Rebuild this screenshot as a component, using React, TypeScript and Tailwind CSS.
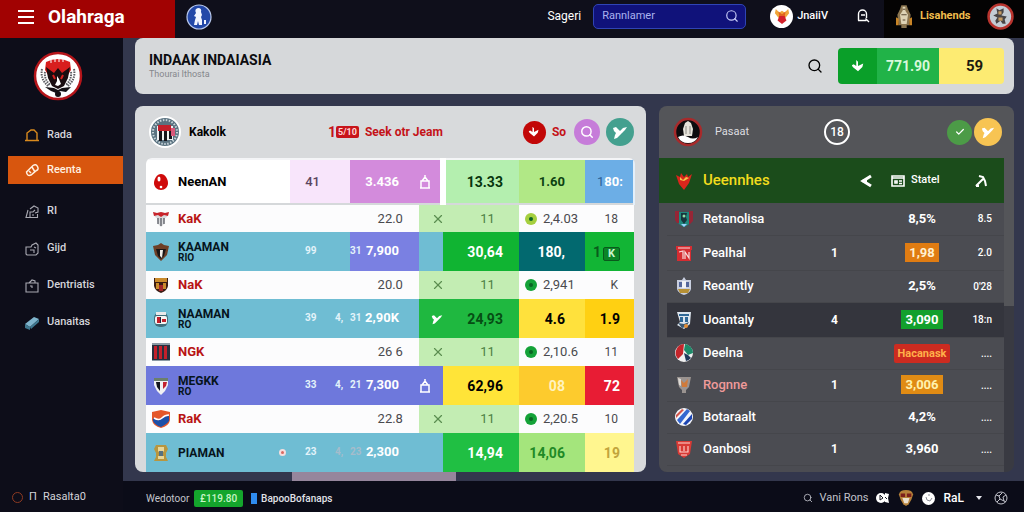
import type { ReactNode } from "react";
import { Check, Search, X } from "lucide-react";

type IconProps = { className?: string };

/* ---------- small icons ---------- */

function Bird({ className }: IconProps) {
  return (
    <svg className={className} viewBox="0 0 16 16" fill="currentColor" aria-hidden="true">
      <path d="M1 4l3-1 3 3 1 1 3-3 4-1-2 3-3 3-5 5-3 1 1-4 1-2-2-2z" />
    </svg>
  );
}

function ArrowDrop({ className }: IconProps) {
  return (
    <svg className={className} viewBox="0 0 16 16" fill="currentColor" aria-hidden="true">
      <path d="M6 1l2 2v5l6-3-1 4-5 5-6-5-1-2 2-1 3 2z" />
    </svg>
  );
}

function LockTag({ className }: IconProps) {
  return (
    <svg className={className} viewBox="0 0 12 14" fill="none" stroke="currentColor" strokeWidth="1.5" aria-hidden="true">
      <path d="M2 6h8v7H2zM3 6l3-4 3 4M6 0v3M1 13h10" />
    </svg>
  );
}

function BagSearch({ className }: IconProps) {
  return (
    <svg className={className} viewBox="0 0 14 14" fill="none" stroke="currentColor" strokeWidth="1.4" aria-hidden="true">
      <path d="M2.5 11.5V5a4 4 0 018 0v4M5 6h4M2 11.5h8.5M9.500 9.500L13 13" />
    </svg>
  );
}

function HomeTag({ className }: IconProps) {
  return (
    <svg className={className} viewBox="0 0 14 14" fill="none" stroke="currentColor" strokeWidth="1.4" aria-hidden="true">
      <path d="M0 12.500h3M11 12.500h3M2 12.500V5l4-3h3l3 3v7.500z" />
    </svg>
  );
}

function Marker({ className }: IconProps) {
  return (
    <svg className={className} viewBox="0 0 14 14" fill="none" stroke="currentColor" strokeWidth="1.5" aria-hidden="true">
      <path d="M1.500 9L8 2.500q3-2 4.500 1t-1 4L6 12q-4 1.500-4.500-3zM7 4l3 5M4 8l2 2" />
    </svg>
  );
}

function FolderUp({ className }: IconProps) {
  return (
    <svg className={className} viewBox="0 0 14 14" fill="none" stroke="currentColor" strokeWidth="1.1" aria-hidden="true">
      <path d="M3 5L1 12.500h11.500V9M5 12V7h3l2-2M5 4l4-3 4 2v4l-3 1M8 9v2" />
    </svg>
  );
}

function CameraTag({ className }: IconProps) {
  return (
    <svg className={className} viewBox="0 0 14 14" fill="none" stroke="currentColor" strokeWidth="1.1" aria-hidden="true">
      <path d="M1 5h5l1-2 4-2 2 2v8l-2 2H2l-1-1zM5 8h4v3M9 5l2 1" />
    </svg>
  );
}

function CaseTag({ className }: IconProps) {
  return (
    <svg className={className} viewBox="0 0 14 14" fill="none" stroke="currentColor" strokeWidth="1.1" aria-hidden="true">
      <path d="M1 4h12v9H1zM4 4l3-3 3 1v2M5 7h2v2" />
    </svg>
  );
}

function Eraser({ className }: IconProps) {
  return (
    <svg className={className} viewBox="0 0 14 14" aria-hidden="true">
      <path d="M0 8l9-7 5 2-9 8z" fill="#7fb4cc" />
      <path d="M0 8l5 3v3l-5-2zM5 11l9-8v3l-8 7z" fill="#3f7890" />
    </svg>
  );
}

function Ball({ className }: IconProps) {
  return (
    <svg className={className} viewBox="0 0 14 14" fill="none" stroke="currentColor" strokeWidth="1" aria-hidden="true">
      <circle cx="7" cy="7" r="6" />
      <path d="M2 4l3 1 1 3-3 3M12 4L9 6l1 4 2 1M5 5l3-3M6 8l4 2" />
    </svg>
  );
}

/* ---------- club crests ---------- */

const SHIELD = "M2 2h14v8q-1 5-7 7-6-2-7-7z";

const crests: Record<string, ReactNode> = {
  egg: (
    <>
      <path d="M9 1c4 0 7 5 7 9s-3 7-7 7-7-3-7-7 3-9 7-9z" fill="#cf0a0a" />
      <ellipse cx="7" cy="6" rx="1.500" ry="2.500" fill="#fff" />
      <circle cx="9" cy="14" r="1.300" fill="#fff" />
    </>
  ),
  eagle: (
    <>
      <path d="M1 2l4 1 4-1 4 1 4-1-2 5-2 1-1 6-3 3-3-3-1-6-2-1z" fill="#d9dadd" />
      <path d="M1 2l4 1 4-1 4 1 4-1-1 4-4-1-3 2-3-2-4 1z" fill="#c8242b" />
      <path d="M6 8v6M9 8v8M12 8v6" stroke="#4a4d57" strokeWidth="1.200" />
    </>
  ),
  bronze: (
    <>
      <path d="M1 3l5-1 3-2 3 2 5 1-2 9-6 6-6-6z" fill="#6e4027" />
      <path d="M4 6h10l-2 7-3 3-3-3z" fill="#1a1616" />
      <path d="M8 7h3l-1 8-2-2z" fill="#f1eee8" />
    </>
  ),
  gold: (
    <>
      <path d={SHIELD} fill="#3a1c14" />
      <path d="M3 2h12v4H3zM4 7h3v6H4zM11 7h3v6h-3z" fill="#c98a2c" />
      <path d="M7 9h4v6H7z" fill="#a2272a" />
    </>
  ),
  round: (
    <>
      <rect x="2" y="2" width="14" height="15" rx="6" fill="#3f6f7d" />
      <rect x="3" y="6" width="12" height="8" rx="2" fill="#f5f4f2" />
      <path d="M4 2h10v3H4z" fill="#e9e9ea" />
      <path d="M5 7h3v6H5zM10 9h4v3h-4z" fill="#c11f2b" />
      <path d="M8 7h1v6H8z" fill="#1d2940" />
    </>
  ),
  stripes: (
    <>
      <path d="M0 0h18v18H0z" fill="#27303f" />
      <path d="M2 3h3v13H2zM7 3h3v13H7zM12 3h3v13h-3z" fill="#c3202b" />
      <path d="M0 0h18v2H0zM0 17h18v1H0z" fill="#8d9aa5" />
    </>
  ),
  badge: (
    <>
      <path d="M2 1h14v7l-3 6-4 4-4-4-3-6z" fill="#f1f1f3" />
      <path d="M2 1h14v3H2z" fill="#6c7f6b" />
      <path d="M4 5h4v9l-3-4z" fill="#15161e" />
      <path d="M11 5h4l-1 4-3 3z" fill="#c32230" />
    </>
  ),
  wave: (
    <>
      <path d="M0 2l9-2 9 2v8q-1 6-9 8-8-2-9-8z" fill="#e4572a" />
      <path d="M1 8q5 4 8 1t8-3v5q-2 3-8 6-6-2-8-6z" fill="#1c4fa8" />
      <path d="M2 8q5 3 8 0t7-3" stroke="#fff" strokeWidth="1.500" fill="none" />
    </>
  ),
  trophy: (
    <>
      <path d="M4 1h10l2 4-2 4v4l2 4H2l2-4V9L2 5z" fill="#b8963f" />
      <path d="M6 3h6v4l-3 3-3-3zM6 12h6v3H6z" fill="#e9d79a" />
      <path d="M7 7h4v5H7z" fill="#567182" />
    </>
  ),
  fire: (
    <>
      <path d="M1 3l4 2 1-4 3 4 3-3 1 3 4-3-3 9-5 7-5-6z" fill="#d9261c" />
      <path d="M5 5l3 3 3-3 3 1-5 3-4-1z" fill="#f3c34a" />
    </>
  ),
  phoenix: (
    <>
      <path d="M2 1l4 4 3-2 3 2 4-4 1 5-4 5H5L1 6z" fill="#f0a63a" />
      <path d="M5 4l4 3 4-3-1 6H6z" fill="#e2641f" />
      <path d="M6 9h6l2 5-5 4-5-4z" fill="#d3202a" />
    </>
  ),
  teal: (
    <>
      <path d={SHIELD} fill="#20897e" />
      <path d="M0 1h4v12H2L0 10zM14 1h4v10l-3 3h-1z" fill="#962636" />
      <path d="M6 3h6l-1 4 1 3-3 4-3-4z" fill="#19343c" />
      <circle cx="9" cy="6" r="1.500" fill="#8fe0a8" />
      <path d="M6 14h6l-3 3z" fill="#9bd0ff" />
    </>
  ),
  red: (
    <>
      <path d="M1 2h16v4h-1v11H2V6H1z" fill="#d62c31" />
      <path d="M3 4h12M4 8l4-1v8M10 15V8l4 6V8" stroke="#f7dcdc" strokeWidth="1.200" fill="none" />
    </>
  ),
  castle: (
    <>
      <path d="M2 3h5l2-3 2 3h5v9q-1 4-7 6-6-2-7-6z" fill="#c9cfdf" />
      <path d="M4 5h10v5H4z" fill="#53659a" />
      <path d="M7 4h4v7H7z" fill="#f0f1f5" />
      <path d="M3 12h12l-2 4H5z" fill="#b69035" />
    </>
  ),
  blue: (
    <>
      <path d="M2 1h14l-1 12-6 5-7-4 3-3z" fill="#dde5ee" />
      <path d="M4 3h10v2H4zM5 6h3v5H5zM10 6h3v5h-3z" fill="#2f6796" />
      <path d="M3 12l6 1 5-2-3 5-4 1z" fill="#3c5a74" />
      <circle cx="11" cy="15" r="2" fill="#e58d33" />
    </>
  ),
  globe: (
    <>
      <circle cx="9" cy="9" r="9" fill="#f1f1f1" />
      <path d="M9 0a9 9 0 00-6 15l5-5z" fill="#c4252b" />
      <path d="M10 0a9 9 0 018 9l-5 2-4-5z" fill="#1e8a6a" />
      <path d="M9 9l4 2 3 3a9 9 0 01-5 3z" fill="#223a5c" />
    </>
  ),
  vase: (
    <>
      <path d="M2 1h14l-2 10-3 3v3H7v-3l-3-3z" fill="#9a9390" />
      <path d="M6 4l3 3 4-4-1 8H7z" fill="#d07a3a" />
      <path d="M3 2l3 1v7l-2-1z" fill="#dcd9d5" />
    </>
  ),
  ball: (
    <>
      <circle cx="9" cy="9" r="9" fill="#f4f6fb" />
      <path d="M2 12L12 1l3 2L5 16z" fill="#3568d0" />
      <path d="M1 7l6-6 2 1-8 8z" fill="#d2574b" />
      <path d="M8 16l9-10v5l-6 6z" fill="#1c45b3" />
    </>
  ),
  cup: (
    <>
      <path d="M1 1h16l-2 13-6 4-6-4z" fill="#d83a35" />
      <path d="M3 3h12M5 6v6h8V6M9 6v5M6 15h6" stroke="#ffd6cf" strokeWidth="1.100" fill="none" />
    </>
  ),
  statue: (
    <>
      <path d="M7 1h4l1 3 2 4-1 8h-2v2H7v-2H5L4 8l2-4z" fill="#8a7550" />
      <path d="M8 2h2v3l2 3-1 7H7L6 8l2-3z" fill="#ded3b5" />
      <path d="M8 4h2M7 8h4M8 12h2" stroke="#5b4b34" strokeWidth="0.800" />
      <path d="M3 10l2 1v5H3zM13 11l2-1v6h-2z" fill="#c88426" />
    </>
  ),
  mask: (
    <>
      <path d="M1 5q1-5 8-5t8 5l-2 6-3 5-3 2-3-2-3-5z" fill="#b5813a" />
      <path d="M3 4h5v4H3zM10 4h5v4h-5z" fill="#7c1f1b" />
      <path d="M5 9h8l-2 6H7z" fill="#eadfce" />
    </>
  ),
};

function Crest({ name, className = "size-[18px]" }: { name: string; className?: string }) {
  return (
    <svg className={`shrink-0 ${className}`} viewBox="0 0 18 18" aria-hidden="true">
      {crests[name]}
    </svg>
  );
}

function GarudaLogo() {
  return (
    <svg className="size-[50px]" viewBox="0 0 50 50" aria-label="Garuda">
      <circle cx="25" cy="25" r="23" fill="#fff" stroke="#b5151a" strokeWidth="2.500" />
      <path d="M13 11q12-6 24 0l1 8-5 8H17l-5-8z" fill="#d81e1e" />
      <path d="M13 16l8 6 4-5 4 5 8-6-2 11-4 8-6 3-6-3-4-8z" fill="#1a0d10" />
      <path d="M18 9v3M22 8v3M26 8v3M30 8v3" stroke="#fff" strokeWidth="1" />
      <path d="M9 18q-2 10 6 17M12 21q-1 7 5 13M41 18q2 10-6 17M38 21q1 7-5 13" stroke="#5d5d62" strokeWidth="2" strokeDasharray="1.500 1" fill="none" />
      <path d="M20 24l2 4M30 24l-2 4" stroke="#d81e1e" strokeWidth="2" />
      <path d="M24 25l2 3 2 5-3 2-3-1 2-4z" fill="#fff" />
      <path d="M12 36l9 1 4 2 4-2 9-1-5 5-6-1-4 2-5-2z" fill="#141014" />
      <circle cx="25" cy="43" r="3" fill="#141014" />
    </svg>
  );
}

/* ---------- standings data ---------- */

type Row = {
  crest: string;
  name: string;
  sub?: string;
  rank?: string;
  mark?: string;
  diff?: string;
  total: string;
  tag?: "lock" | "check";
  score: string;
  rate: string;
  last: string;
  faint?: boolean;
  bg: string[]; // name, rank, total, tag, score, rate, last
};

const AQUA = "bg-[#6fbdd3]";
const INDIGO = "bg-[#6e78dc]";

const rows: Row[] = [
  {
    crest: "bronze", name: "KAAMAN", sub: "RIO", rank: "99", diff: "31", total: "7,900", score: "30,64", rate: "180,", last: "1",
    bg: [AQUA, AQUA, "bg-[#7a80e2]", AQUA, "bg-[#10b432] text-white", "bg-[#02696f] text-white", "bg-[#12b535] text-[#0a5a1c]"],
  },
  {
    crest: "round", name: "NAAMAN", sub: "RO", rank: "39", mark: "4,", diff: "31", total: "2,90K", tag: "check", score: "24,93", rate: "4.6", last: "1.9",
    bg: [AQUA, AQUA, AQUA, "bg-[#1fb840]", "bg-[#1fb840] text-[#064d14]", "bg-[#ffe13c] text-black", "bg-[#ffd012] text-black"],
  },
  {
    crest: "badge", name: "MEGKK", sub: "RO", rank: "33", mark: "4,", diff: "21", total: "7,300", tag: "lock", score: "62,96", rate: "08", last: "72",
    bg: [INDIGO, INDIGO, INDIGO, INDIGO, "bg-[#ffe438] text-black", "bg-[#fdcb2d] text-[#fff3c0]", "bg-[#e81c34] text-white"],
  },
  {
    crest: "trophy", name: "PIAMAN", rank: "23", mark: "4,", diff: "23", total: "2,300", score: "14,94", rate: "14,06", last: "19", faint: true,
    bg: [AQUA, AQUA, AQUA, AQUA, "bg-[#20bf43] text-white", "bg-[#a4e57c] text-[#1f8a26]", "bg-[#fff68f] text-[#c2a43c]"],
  },
];

const subRows = [
  { crest: "eagle", name: "KaK", total: "22.0", rate: "2,4.03", last: "18", dot: "bg-[#a5cf3f]" },
  { crest: "gold", name: "NaK", total: "20.0", rate: "2,941", last: "K", dot: "bg-[#14a238]" },
  { crest: "stripes", name: "NGK", total: "26 6", rate: "2,10.6", last: "11", dot: "bg-[#14a238]" },
  { crest: "wave", name: "RaK", total: "22.8", rate: "2,20.5", last: "10", dot: "bg-[#14a238]" },
];

function SubRow({ row }: { row: (typeof subRows)[number] }) {
  return (
    <tr className="h-7 bg-[#fcfcfd] text-[13px] text-[#4a4a4e]">
      <td>
        <div className="flex items-center gap-2 pl-1.5">
          <Crest name={row.crest} />
          <span className="font-bold text-[#b81414]">{row.name}</span>
        </div>
      </td>
      <td />
      <td className="pr-4 text-right">{row.total}</td>
      <td className="bg-[#c3edb3]">
        <X className="ml-3 size-3.5 text-[#5b8d50]" strokeWidth={2} />
      </td>
      <td className="bg-[#c3edb3] pr-6 text-right text-[#4c8044]">11</td>
      <td>
        <div className="flex items-center gap-1.5 pl-1.5">
          <span className={`flex size-3 shrink-0 items-center justify-center rounded-full ${row.dot}`}>
            <span className="size-1 rounded-full bg-[#0b6424]" />
          </span>
          {row.rate}
        </div>
      </td>
      <td className="pr-4 text-right text-xs">{row.last}</td>
    </tr>
  );
}

function MainRow({ row }: { row: Row }) {
  const bg = row.bg;
  const soft = row.faint ? "text-[#a5bccb]" : "text-[#e3f3fa]";
  return (
    <tr className="h-[39px] text-sm font-bold text-white">
      <td className={bg[0]}>
        <div className="flex items-center gap-2 pl-1.5">
          <Crest name={row.crest} />
          <div className="text-xs leading-3 text-[#06141c]">
            {row.name}
            {row.sub && <div className="text-[10px] leading-2.5">{row.sub}</div>}
          </div>
          {row.faint && (
            <span className="mr-1 ml-auto flex size-[7px] items-center justify-center rounded-full bg-[#f4dede]">
              <span className="size-[3px] rounded-full bg-[#d96a62]" />
            </span>
          )}
        </div>
      </td>
      <td className={bg[1]}>
        <div className="flex pl-[15px] text-[10px] text-[#e3f3fa]">
          <span className="w-[30px]">{row.rank}</span>
          <span className={soft}>{row.mark}</span>
        </div>
      </td>
      <td className={bg[2]}>
        <div className="flex items-center justify-between pr-5 text-[13px] whitespace-nowrap">
          <span className={`text-[10px] ${soft}`}>{row.diff}</span>
          {row.total}
        </div>
      </td>
      <td className={bg[3]}>
        {row.tag === "lock" && <LockTag className="h-3.5 w-3" />}
        {row.tag === "check" && <Bird className="ml-3 size-3" />}
      </td>
      <td className={`pr-4 text-right ${bg[4]}`}>{row.score}</td>
      <td className={`pr-5 text-right ${bg[5]}`}>{row.rate}</td>
      <td className={`pr-3.5 text-right ${bg[6]}`}>
        {row.last}
        {row.last === "1" && (
          <span className="ml-0.5 inline-block rounded-xs border border-[#0a5a1c] bg-[#0b8527] px-1 text-[11px] leading-3 text-[#c9f5cf]">
            K
          </span>
        )}
      </td>
    </tr>
  );
}

function StandingsPanel() {
  return (
    <section className="overflow-hidden rounded-lg bg-[#d8dadc]">
      <div className="flex h-[52px] items-center pr-3 pl-3.5">
        <svg className="size-8" viewBox="0 0 32 32" aria-hidden="true">
          <circle cx="16" cy="16" r="15" fill="#5a7280" stroke="#fff" strokeWidth="2" />
          <circle cx="16" cy="16" r="12" fill="none" stroke="#c9d5da" strokeWidth="2" strokeDasharray="1.500 1.500" />
          <path d="M8 10h16v14H8z" fill="#eef0f2" />
          <path d="M9 9h13v6H9z" fill="#c3202b" />
          <path d="M10 15h3v10h-3zM15 15h3v10h-3zM20 15h3v8h-3z" fill="#15151c" />
          <path d="M22 12h4v8h-4z" fill="#d8587a" />
        </svg>
        <h2 className="ml-2 w-[139px] text-xs font-bold">Kakolk</h2>
        <div className="flex items-center text-xs font-bold text-[#c41218]">
          <span className="text-sm">1</span>
          <span className="rounded-xs bg-[#c8141a] px-0.5 text-[9px] leading-3 text-[#ffd8d8]">5/10</span>
          <span className="ml-1.5">Seek otr Jeam</span>
        </div>
        <div className="ml-auto flex items-center gap-1.5">
          <button className="flex size-[23px] items-center justify-center rounded-full bg-[#c20707] text-white" aria-label="Turun">
            <ArrowDrop className="size-3" />
          </button>
          <span className="w-4 text-xs font-bold text-[#c41218]">So</span>
          <button className="flex size-[26px] items-center justify-center rounded-full bg-[#c67cd9] text-white" aria-label="Cari">
            <Search className="size-3.5" strokeWidth={2.5} />
          </button>
          <button className="flex size-7 items-center justify-center rounded-full bg-[#44a08f] text-white" aria-label="Kirim">
            <Bird className="size-4" />
          </button>
        </div>
      </div>

      <div className="mx-[11px] overflow-hidden rounded-t-md">
        <table className="w-full table-fixed border-collapse">
          <colgroup>
            <col />
            <col className="w-[60px]" />
            <col className="w-[69px]" />
            <col className="w-6" />
            <col className="w-[76px]" />
            <col className="w-[66px]" />
            <col className="w-[49px]" />
          </colgroup>
          <tbody>
            <tr className="h-[45px] border-t-2 border-b-2 border-t-[#f4f5f7] border-b-[#d5d8da] bg-white text-[13px] font-bold">
              <td>
                <div className="flex items-center gap-2 pl-1.5">
                  <Crest name="egg" />
                  NeenAN
                </div>
              </td>
              <td className="bg-[#f8e5fb] pr-[30px] text-right font-medium text-[#5c4560]">41</td>
              <td className="bg-[#d38bdc] pr-5 text-right text-white">3.436</td>
              <td className="border-r-6 border-white bg-[#d38bdc] text-white">
                <LockTag className="h-3.5 w-3" />
              </td>
              <td className="bg-[#b4efaf] pr-4 text-right text-sm text-[#06350d]">13.33</td>
              <td className="bg-[#b1e886] pr-5 text-right text-[#0d4212]">1.60</td>
              <td className="border-r-2 border-[#e3effa] bg-[#6caee6] pr-2.5 text-right text-white">
                <span className="font-normal text-[#2c5f95]">1</span>80:
              </td>
            </tr>
            {rows.flatMap((row, i) => [
              <SubRow key={subRows[i].name} row={subRows[i]} />,
              <MainRow key={row.name} row={row} />,
            ])}
          </tbody>
        </table>
      </div>
    </section>
  );
}

/* ---------- teams panel ---------- */

const teams = [
  { crest: "teal", name: "Retanolisa", value: "8,5%", last: "8.5", height: "h-8" },
  { crest: "red", name: "Pealhal", count: "1", value: "1,98", badge: "bg-[#e07c12] text-[#fff0d0]", last: "2.0", height: "h-[35px]" },
  { crest: "castle", name: "Reoantly", value: "2,5%", last: "0'28", height: "h-8" },
  { crest: "blue", name: "Uoantaly", count: "4", value: "3,090", badge: "bg-[#12a02c] text-white", last: "18:n", height: "h-[35px]", active: true },
  { crest: "globe", name: "Deelna", value: "Hacanask", badge: "rounded-xs bg-[#cc2b20] text-[11px] text-[#ffb04a]", last: "....", height: "h-8" },
  { crest: "vase", name: "Rognne", count: "1", value: "3,006", badge: "bg-[#e08b14] text-[#fff2ae]", last: "....", height: "h-8", red: true },
  { crest: "ball", name: "Botaraalt", value: "4,2%", last: "....", height: "h-8" },
  { crest: "cup", name: "Oanbosi", count: "1", value: "3,960", last: "....", height: "h-8" },
];

function TeamsPanel() {
  return (
    <section className="overflow-hidden rounded-lg bg-[linear-gradient(#545559_200px,#393a42_200px)] text-white">
      <div className="flex h-[52px] items-center pr-3 pl-3.5">
        <svg className="size-[30px]" viewBox="0 0 30 30" aria-hidden="true">
          <circle cx="15" cy="15" r="13" fill="#0d0c0e" stroke="#a82a2b" strokeWidth="2.500" />
          <path d="M12 6l3-2 3 2 2 6-1 7h-8l-1-7z" fill="#e6e3da" />
          <path d="M5 20q5-3 10 0t10 0q-3 6-10 6T5 20z" fill="#fff" />
          <path d="M13 9v8M17 9v8" stroke="#8c8a84" />
        </svg>
        <h2 className="ml-3 text-[11px] text-[#dedee0]">Pasaat</h2>
        <span className="ml-auto flex size-[26px] items-center justify-center rounded-full border-2 border-white text-xs font-medium">
          18
        </span>
        <div className="ml-[97px] flex items-center gap-0.5">
          <button className="flex size-[25px] items-center justify-center rounded-full bg-[#4c9b47]" aria-label="Setuju">
            <Check className="size-2.5" strokeWidth={3} />
          </button>
          <button className="flex size-7 items-center justify-center rounded-full bg-[#f7c453]" aria-label="Kirim">
            <Bird className="size-3.5" />
          </button>
        </div>
      </div>

      <div className="mr-2.5 bg-[#4b4c52] pb-1.5">
        <table className="w-full table-fixed border-collapse">
          <colgroup>
            <col className="w-2" />
            <col />
            <col className="w-[60px]" />
            <col className="w-[72px]" />
            <col className="w-[46px]" />
          </colgroup>
          <thead>
            <tr className="h-[45px] bg-[#1b4c1b] text-left">
              <th />
              <th>
                <div className="flex items-center gap-2.5 pl-2 text-[15px] font-medium text-[#f2dc1e]">
                  <Crest name="fire" />
                  Ueennhes
                </div>
              </th>
              <th>
                <svg className="mr-3.5 ml-auto h-3.5 w-3" viewBox="0 0 12 14" fill="none" stroke="currentColor" strokeWidth="3" aria-hidden="true">
                  <path d="M11 2L3 7l8 5M2 7h5" />
                </svg>
              </th>
              <th>
                <div className="flex items-center gap-1.5 pl-[5px] text-[11px] font-medium">
                  <svg className="h-3 w-3.5" viewBox="0 0 14 12" fill="none" stroke="currentColor" strokeWidth="1.600" aria-hidden="true">
                    <path d="M1 1h12v10H1zM1 3h12M4 6h2v2H4zM8 6h3M8 8.500h3" />
                  </svg>
                  Statel
                </div>
              </th>
              <th>
                <svg className="ml-4 size-3.5" viewBox="0 0 14 14" fill="none" stroke="currentColor" strokeWidth="2" aria-hidden="true">
                  <path d="M2 12l7-7M5 2l4 1 2 4 1 5M2 12h3" />
                </svg>
              </th>
            </tr>
          </thead>
          <tbody>
            {teams.map((t) => (
              <tr key={t.name} className={t.height}>
                <td />
                <td className={`border-b border-[#45464b] ${t.active ? "bg-[#34353d]" : ""}`}>
                  <div className={`flex items-center gap-2.5 pl-2 text-[13px] font-medium ${t.red ? "text-[#ef9a9a]" : ""}`}>
                    <Crest name={t.crest} />
                    {t.name}
                  </div>
                </td>
                <td className={`border-b border-[#45464b] pr-12 text-right text-xs font-bold ${t.active ? "bg-[#34353d]" : ""}`}>
                  {t.count}
                </td>
                <td className={`border-b border-[#45464b] text-center text-[13px] font-bold ${t.active ? "bg-[#34353d]" : ""}`}>
                  <span className={`inline-block px-1 leading-[19px] ${t.badge ?? ""}`}>{t.value}</span>
                </td>
                <td className={`border-b border-[#45464b] pr-3 text-right text-[10px] font-medium ${t.active ? "bg-[#34353d]" : ""}`}>
                  {t.last}
                </td>
              </tr>
            ))}
          </tbody>
        </table>
      </div>
    </section>
  );
}

/* ---------- page frame ---------- */

function TopBar() {
  return (
    <header className="flex h-[38px] bg-[#0f0f1b] text-white">
      <div className="flex w-[175px] items-center gap-3.5 bg-[#a10202] pb-1 pl-[18px]">
        <button aria-label="Menu" className="flex w-4 flex-col gap-1">
          <span className="h-0.5 bg-white" />
          <span className="h-0.5 bg-white" />
          <span className="h-0.5 bg-white" />
        </button>
        <a href="#" className="text-[19px] leading-6 font-bold">
          Olahraga
        </a>
      </div>
      <svg className="mt-1 ml-[11px] size-[26px]" viewBox="0 0 26 26" aria-hidden="true">
        <circle cx="13" cy="13" r="12" fill="#2348a8" stroke="#b9c9ee" strokeWidth="1.200" />
        <path d="M12 4q4 0 3 4l1 3-1 2 1 3v5h-3l-1-4-1 4H8l1-5 1-3-2-1 2-3q-2-4 2-5zM18 16h2v4h-2z" fill="#f2f5ff" />
      </svg>
      <div className="ml-auto flex items-center pb-1.5">
        <label htmlFor="search" className="mr-3 text-xs">
          Sageri
        </label>
        <div className="flex h-[25px] w-[153px] items-center rounded-[5px] border border-[#2f44b4] bg-[#10127a] pr-1.5 pl-2">
          <input
            id="search"
            placeholder="Rannlamer"
            className="min-w-0 flex-1 bg-transparent text-[11px] text-white outline-none placeholder:text-[#aab2f0]"
          />
          <Search className="size-3.5 text-[#c8cdf8]" />
        </div>
        <a href="#" className="ml-6 flex items-center gap-1 text-[11px] font-medium">
          <span className="flex size-[23px] items-center justify-center rounded-full bg-white">
            <Crest name="phoenix" className="size-4" />
          </span>
          JnaiiV
        </a>
        <button aria-label="Tas" className="mr-3.5 ml-7">
          <BagSearch className="size-3.5" />
        </button>
      </div>
      <div className="flex w-[140px] items-center bg-[#040303] pb-1.5 pl-2">
        <Crest name="statue" className="size-6" />
        <span className="ml-1 w-14 text-[11px] font-bold text-[#f0bd4d]">Lisahends</span>
        <svg className="mr-2.5 ml-auto size-[27px]" viewBox="0 0 26 26" aria-hidden="true">
          <circle cx="13" cy="13" r="11.500" fill="#c4ccd4" stroke="#b8342e" strokeWidth="2.500" />
          <path d="M9 5l3 2 4-2v4l-2 3 5 1-2 3 1 4h-3l-2-3-4 3-1-3 2-3-4-2 4-2z" fill="#4a4546" />
          <path d="M11 8h3v3h-3zM11 14h4v3h-4z" fill="#c59b62" />
        </svg>
      </div>
    </header>
  );
}

const menu = [
  { label: "Rada", icon: HomeTag },
  { label: "Reenta", icon: Marker },
  { label: "RI", icon: FolderUp },
  { label: "Gijd", icon: CameraTag },
  { label: "Dentriatis", icon: CaseTag },
  { label: "Uanaitas", icon: Eraser },
];

function Sidebar() {
  return (
    <aside className="flex w-[123px] shrink-0 flex-col bg-[#0d0d19] text-[11px] text-[#d4d4da]">
      <div className="flex h-[83px] justify-center pt-[13px] pr-2">
        <GarudaLogo />
      </div>
      <nav className="flex flex-col">
        {menu.slice(0, 2).map(({ label, icon: Icon }, i) => (
          <a
            key={label}
            href="#"
            className={`mb-[7px] ml-2 flex h-7 items-center gap-2 pl-[17px] font-medium ${
              i === 1 ? "bg-[#d8560e] text-[#fff0e0]" : ""
            }`}
          >
            <Icon className={i === 0 ? "size-3.5 text-[#d98a1e]" : "size-3.5"} />
            {label}
          </a>
        ))}
        <div className="pt-0.5">
          {menu.slice(2).map(({ label, icon: Icon }) => (
            <a key={label} href="#" className="ml-2 flex h-[37px] items-center gap-2 pl-[17px] font-medium">
              <Icon className="size-3.5 text-[#a9a9b2]" />
              {label}
            </a>
          ))}
        </div>
      </nav>
      <div className="mt-auto flex h-8 items-center gap-1.5 pl-3">
        <span className="size-[11px] rounded-full border border-[#8e3a22]" />
        <span className="w-2">Π</span>
        Rasalta0
      </div>
    </aside>
  );
}

function Footer() {
  return (
    <footer className="flex h-8 items-center bg-[#0b0c18] pt-0.5 pr-4 pl-[23px] text-[11px] text-[#c3c4cc]">
      <span className="w-11 text-[10px]">Wedotoor</span>
      <span className="ml-1 rounded-xs bg-[#14a52c] px-1.5 text-[10px] leading-[17px] font-medium text-[#c8f5c8]">£119.80</span>
      <span className="mr-1 ml-2 h-[11px] w-1.5 bg-[#2f8cf0]" />
      <span className="text-[10px] font-medium text-[#e1e2e8]">BapooBofanaps</span>
      <div className="ml-auto flex items-center">
        <Search className="size-2.5" />
        <a href="#" className="mr-2 ml-1.5">Vani Rons</a>
        <svg className="h-3 w-3.5" viewBox="0 0 14 12" aria-hidden="true">
          <circle cx="5" cy="6" r="5" fill="#fff" />
          <path d="M9 1l4 1-1 4 1 5-4-1z" fill="#fff" />
          <path d="M4 3v5l3-2zM9 5l2 2" stroke="#15151f" fill="none" />
        </svg>
        <Crest name="mask" className="mr-2 ml-2 size-4" />
        <svg className="mr-2 size-[13px]" viewBox="0 0 13 13" aria-hidden="true">
          <circle cx="6.500" cy="6.500" r="6.500" fill="#fff" />
          <path d="M4 5l1 3 3 1 2-3M6 3h2" stroke="#8b8d96" fill="none" />
        </svg>
        <span className="text-xs font-medium text-white">RaL</span>
        <svg className="mr-3 ml-3 h-1 w-1.5" viewBox="0 0 6 4" aria-hidden="true">
          <path d="M0 0h6L3 4z" fill="#e6e6ec" />
        </svg>
        <Ball className="size-3.5" />
      </div>
    </footer>
  );
}

export default function App() {
  return (
    <div className="flex min-h-screen flex-col bg-[#33374d] font-[Roboto,'Liberation_Sans',sans-serif]">
      <TopBar />
      <div className="flex flex-1">
        <Sidebar />
        <div className="flex min-w-0 flex-1 flex-col">
          <main className="flex-1 pr-2.5 pl-3">
            <div className="mb-3 flex h-14 items-center rounded-lg bg-[#d6d8da] pr-2.5 pl-3.5">
              <div>
                <h1 className="text-sm leading-4 font-bold text-[#0c0c0f]">INDAAK INDAIASIA</h1>
                <p className="text-[9px] leading-3 text-[#85878c]">Thourai Ithosta</p>
              </div>
              <button aria-label="Cari" className="mr-[15px] ml-auto">
                <Search className="size-4" />
              </button>
              <div className="flex h-9 items-center overflow-hidden rounded-sm text-center text-[15px] leading-9 font-bold">
                <span className="flex h-9 w-[39px] items-center justify-center bg-[#0a9f29] text-white">
                  <ArrowDrop className="size-3.5" />
                </span>
                <span className="w-[62px] bg-[#21b348] text-sm leading-9 text-[#d9f8dc]">771.90</span>
                <span className="w-[65px] bg-[#fdeb72] pl-1.5 text-[#1b1a10]">59</span>
              </div>
            </div>
            <div className="grid grid-cols-[59fr_41fr] gap-[13px]">
              <StandingsPanel />
              <TeamsPanel />
            </div>
            <div className="ml-[157px] h-[9px] w-[164px] bg-[#96869c]" />
          </main>
          <Footer />
        </div>
      </div>
    </div>
  );
}
